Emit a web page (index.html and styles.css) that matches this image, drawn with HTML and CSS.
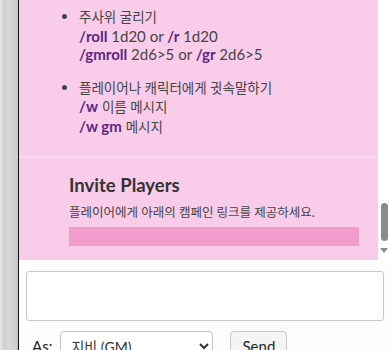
FILE: index.html
```html
<!DOCTYPE html>
<html lang="ko">
<head>
    <meta charset="UTF-8">
    <meta name="viewport" content="width=device-width, initial-scale=1.0">
    <title>Campaign Chat</title>
    <link rel="stylesheet" href="styles.css">
</head>
<body>
    <div class="layout">
        <div class="side-strip"></div>

        <div class="panel">
            <div class="chat-row">
                <div class="chat-log">
                    <ul class="help-list">
                        <li>
                            <span class="ko">주사위 굴리기</span><br>
                            <b class="cmd">/roll</b> 1d20 or <b class="cmd">/r</b> 1d20<br>
                            <b class="cmd">/gmroll</b> 2d6&gt;5 or <b class="cmd">/gr</b> 2d6&gt;5
                        </li>
                        <li>
                            <span class="ko">플레이어나 캐릭터에게 귓속말하기</span><br>
                            <b class="cmd">/w</b> <span class="ko">이름 메시지</span><br>
                            <b class="cmd">/w gm</b> <span class="ko">메시지</span>
                        </li>
                    </ul>

                    <div class="invite">
                        <h2>Invite Players</h2>
                        <p>플레이어에게 아래의 캠페인 링크를 제공하세요.</p>
                        <div class="invite-link"></div>
                    </div>
                </div>

                <div class="scrollbar">
                    <div class="scroll-thumb"></div>
                    <div class="scroll-down"></div>
                </div>
            </div>

            <div class="composer">
                <textarea class="chat-input"></textarea>
                <div class="send-row">
                    <label class="as-label" for="speakAs">As:</label>
                    <select id="speakAs" class="speak-as">
                        <option>지비 (GM)</option>
                    </select>
                    <button class="send-button">Send</button>
                </div>
            </div>
        </div>
    </div>
</body>
</html>
```

FILE: styles.css
```css
body {
    margin: 0;
    font-family: 'Lato', 'Noto Sans CJK KR', sans-serif;
    color: #444;
    background-color: #fdfdfd;
    overflow: hidden;
}
.layout {
    display: flex;
    height: 350px;
}
.side-strip {
    width: 18px;
    flex-shrink: 0;
    background: linear-gradient(to right, #e4e4e4 0, #e4e4e4 2px, #cfcfcf 3px, #d8d8d8 8px, #d2d2d2 14px, #c6c6c6 18px);
    border-right: 1px solid #111;
}
.panel {
    flex: 1;
    display: flex;
    flex-direction: column;
    overflow: hidden;
}
.chat-row {
    display: flex;
    height: 260px;
    flex-shrink: 0;
}
.chat-log {
    flex: 1;
    background-color: #f9cce9;
    overflow: hidden;
}
.help-list {
    margin: 0;
    padding: 7px 0 0 60px;
    font-size: 15px;
    line-height: 18.5px;
}
.help-list li {
    margin-bottom: 14px;
}
.help-list li:last-child {
    margin-bottom: 20px;
}
.ko {
    font-size: 13.5px;
}
.cmd {
    color: #5b2785;
    font-weight: bold;
}
.invite {
    border-top: 2px solid #fad7ee;
    padding: 16px 19px 0 50px;
}
.invite h2 {
    margin: 0 0 8px 0;
    font-size: 18.5px;
    color: #333;
}
.invite p {
    margin: 0 0 5px 0;
    font-size: 12.5px;
    line-height: 18px;
}
.invite-link {
    height: 19px;
    background-color: #f29bcd;
}
.scrollbar {
    width: 12px;
    background-color: #fff;
    display: flex;
    flex-direction: column;
    align-items: center;
}
.scroll-thumb {
    width: 7px;
    height: 38px;
    margin-top: 203px;
    border-radius: 4px;
    background-color: #8b8b8b;
}
.scroll-down {
    margin-top: 7px;
    width: 0;
    height: 0;
    border-left: 4px solid transparent;
    border-right: 4px solid transparent;
    border-top: 5px solid #8b8b8b;
}
.composer {
    padding: 11px 6px 0 7px;
}
.chat-input {
    display: block;
    box-sizing: border-box;
    width: 100%;
    height: 50px;
    border: 1px solid #c8c8c8;
    border-radius: 3px;
    background-color: #fff;
    resize: none;
}
.send-row {
    display: flex;
    align-items: flex-start;
    margin-top: 10px;
}
.as-label {
    font-size: 15px;
    color: #222;
    margin: 6px 8px 0 6px;
}
.speak-as {
    width: 153px;
    height: 30px;
    border: 1px solid #c4c4c4;
    border-radius: 4px;
    background-color: #fff;
    font-family: 'Lato', 'Noto Sans CJK KR', sans-serif;
    font-size: 14px;
    color: #333;
    padding-left: 6px;
}
.send-button {
    margin-left: 17px;
    width: 57px;
    height: 30px;
    border: 1px solid #c6c6c6;
    border-radius: 4px;
    background-color: #f4f4f4;
    font-family: 'Lato', sans-serif;
    font-size: 15px;
    color: #222;
}
```
